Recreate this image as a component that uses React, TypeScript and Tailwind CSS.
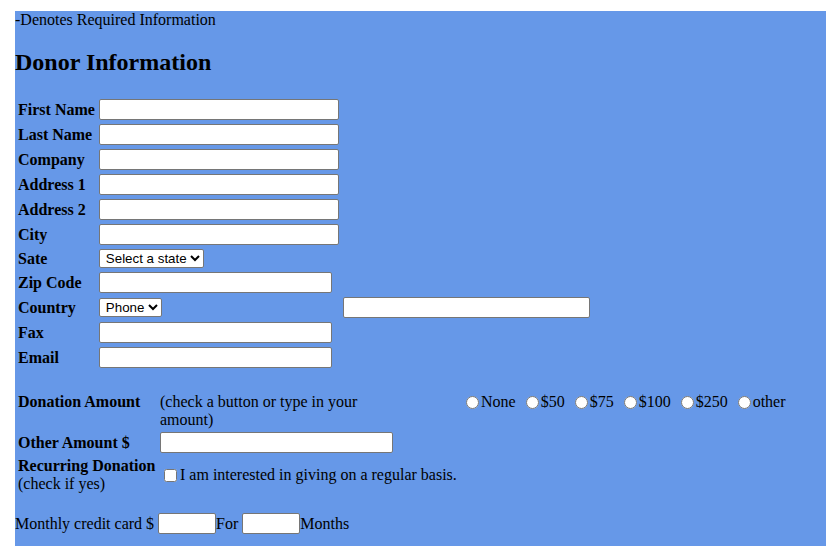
import React from "react";

const field = "h-[21px] border border-[#767676] rounded-[2px] bg-white px-[2px] text-[13.33px] font-['Liberation_Sans',Arial,sans-serif]";
const dropdown = "h-[19px] border border-[#767676] rounded-[2px] bg-white pl-[2px] text-[13.33px] text-black font-['Liberation_Sans',Arial,sans-serif]";

function Row({ label, children }: { label: string; children: React.ReactNode }) {
  return (
    <>
      <div className="font-bold">{label}</div>
      {children}
    </>
  );
}

export default function App() {
  const wide = ["First Name", "Last Name", "Company", "Address 1", "Address 2", "City"];
  const amounts = ["None", "$50", "$75", "$100", "$250", "other"];

  return (
    <div className="min-h-screen bg-white pl-[15px] pt-[11px] font-['Liberation_Serif','Times_New_Roman',serif] text-[16px] leading-[normal] text-black">
      <div className="min-h-[535px] bg-[#6698e8]">
        <div>-Denotes Required Information</div>
        <h2 className="mt-[20px] mb-[20px] text-[24px] font-bold">Donor Information</h2>

        {/* donor table */}
        <div className="grid grid-cols-[auto_240px_auto] items-center justify-start gap-x-[4px] gap-y-[4px] pl-[3px] pt-[3px]">
          {wide.map((l) => (
            <Row key={l} label={l}>
              <input className={`${field} w-[240px]`} />
              <div />
            </Row>
          ))}
          <Row label="Sate">
            <div>
              <select className={`${dropdown} w-[105px]`}>
                <option>Select a state</option>
              </select>
            </div>
            <div />
          </Row>
          <Row label="Zip Code">
            <input className={`${field} w-[233px]`} />
            <div />
          </Row>
          <Row label="Country">
            <div>
              <select className={`${dropdown} w-[63px]`}>
                <option>Phone</option>
              </select>
            </div>
            <input className={`${field} w-[247px]`} />
          </Row>
          <Row label="Fax">
            <input className={`${field} w-[233px]`} />
            <div />
          </Row>
          <Row label="Email">
            <input className={`${field} w-[233px]`} />
            <div />
          </Row>
        </div>

        {/* donation table */}
        <div className="mt-[25px] grid grid-cols-[138px_297px_auto] gap-x-[4px] gap-y-[3px] pl-[3px]">
          <div className="font-bold">Donation Amount</div>
          <div className="w-[233px]">(check a button or type in your amount)</div>
          <div className="flex items-start">
            {amounts.map((a) => (
              <label key={a} className="mr-[5px] flex items-center whitespace-nowrap">
                <input type="radio" name="amt" className="ml-[5px] mr-[2px] h-[13px] w-[13px]" />
                {a}
              </label>
            ))}
          </div>

          <div className="self-center font-bold">Other Amount $</div>
          <input className={`${field} w-[233px]`} />
          <div />

          <div className="mt-[1px] self-center">
            <div className="font-bold">Recurring Donation</div>
            <div>(check if yes)</div>
          </div>
          <label className="col-span-2 mt-[1px] flex items-center self-center whitespace-nowrap">
            <input type="checkbox" className="ml-[4px] mr-[3px] h-[13px] w-[13px]" />
            I am interested in giving on a regular basis.
          </label>
        </div>

        <div className="mt-[20px] flex items-center whitespace-pre">
          <span>Monthly credit card $ </span>
          <input className={`${field} w-[58px]`} />
          <span>For </span>
          <input className={`${field} w-[58px]`} />
          <span>Months</span>
        </div>
      </div>
    </div>
  );
}
